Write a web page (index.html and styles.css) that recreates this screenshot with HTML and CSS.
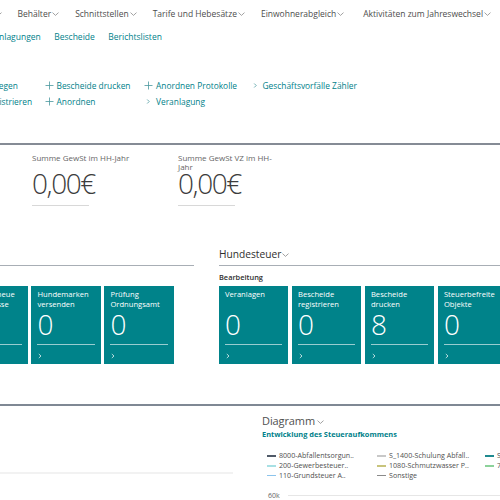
FILE: index.html
```html
<!DOCTYPE html>
<html lang="de">
<head>
<meta charset="utf-8">
<title>Rollencenter Steuern</title>
<link rel="stylesheet" href="styles.css">
</head>
<body>
<div class="page">
  <nav class="menu">
    <span class="menu-item lead"><svg class="chev" viewBox="0 0 7 4"><path d="M0.5 0.6L3.5 3.4L6.5 0.6"/></svg></span>
    <span class="menu-item">Behälter<svg class="chev" viewBox="0 0 7 4"><path d="M0.5 0.6L3.5 3.4L6.5 0.6"/></svg></span>
    <span class="menu-item">Schnittstellen<svg class="chev" viewBox="0 0 7 4"><path d="M0.5 0.6L3.5 3.4L6.5 0.6"/></svg></span>
    <span class="menu-item">Tarife und Hebesätze<svg class="chev" viewBox="0 0 7 4"><path d="M0.5 0.6L3.5 3.4L6.5 0.6"/></svg></span>
    <span class="menu-item">Einwohnerabgleich<svg class="chev" viewBox="0 0 7 4"><path d="M0.5 0.6L3.5 3.4L6.5 0.6"/></svg></span>
    <span class="menu-item wide">Aktivitäten zum Jahreswechsel<svg class="chev" viewBox="0 0 7 4"><path d="M0.5 0.6L3.5 3.4L6.5 0.6"/></svg></span>
  </nav>

  <nav class="links">
    <a class="link lead">Veranlagungen</a>
    <a class="link">Bescheide</a>
    <a class="link">Berichtslisten</a>
  </nav>

  <div class="actions">
    <div class="action-col col1">
      <a class="action"><svg class="ico" viewBox="0 0 9 9"><path d="M4.5 0.5V8.5M0.5 4.5H8.5"/></svg>Bescheide anlegen</a>
      <a class="action"><svg class="ico" viewBox="0 0 9 9"><path d="M4.5 0.5V8.5M0.5 4.5H8.5"/></svg>Bescheide registrieren</a>
    </div>
    <div class="action-col col2">
      <a class="action"><svg class="ico" viewBox="0 0 9 9"><path d="M4.5 0.5V8.5M0.5 4.5H8.5"/></svg>Bescheide drucken</a>
      <a class="action"><svg class="ico" viewBox="0 0 9 9"><path d="M4.5 0.5V8.5M0.5 4.5H8.5"/></svg>Anordnen</a>
    </div>
    <div class="action-col col3">
      <a class="action"><svg class="ico" viewBox="0 0 9 9"><path d="M4.5 0.5V8.5M0.5 4.5H8.5"/></svg>Anordnen Protokolle</a>
      <a class="action"><svg class="ico" viewBox="0 0 9 9"><path d="M3.2 2.5L5.2 4.5L3.2 6.5"/></svg>Veranlagung</a>
    </div>
    <div class="action-col col4">
      <a class="action"><svg class="ico" viewBox="0 0 9 9"><path d="M3.2 2.5L5.2 4.5L3.2 6.5"/></svg>Geschäftsvorfälle Zähler</a>
    </div>
  </div>

  <section class="kpis">
    <div class="kpi">
      <div class="kpi-label">Summe GewSt im HH-Jahr</div>
      <div class="kpi-value">0,00€</div>
      <div class="kpi-bar"></div>
    </div>
    <div class="kpi">
      <div class="kpi-label">Summe GewSt VZ im HH-Jahr</div>
      <div class="kpi-value">0,00€</div>
      <div class="kpi-bar"></div>
    </div>
  </section>

  <div class="groups">
    <section class="group group-left">
      <h2 class="group-title">Hundemarken<svg class="chev" viewBox="0 0 7 4"><path d="M0.5 0.6L3.5 3.4L6.5 0.6"/></svg></h2>
      <div class="group-sub">Bearbeitung</div>
      <div class="tiles">
        <a class="tile"><span class="tile-label">Anträge<br>prüfen</span><span class="tile-num">0</span><span class="tile-line"></span><svg class="tile-chev" viewBox="0 0 4 6"><path d="M0.8 1L3 3L0.8 5"/></svg></a>
        <a class="tile"><span class="tile-label">Zugänge neue<br>Hundepässe</span><span class="tile-num">0</span><span class="tile-line"></span><svg class="tile-chev" viewBox="0 0 4 6"><path d="M0.8 1L3 3L0.8 5"/></svg></a>
        <a class="tile"><span class="tile-label">Hundemarken<br>versenden</span><span class="tile-num">0</span><span class="tile-line"></span><svg class="tile-chev" viewBox="0 0 4 6"><path d="M0.8 1L3 3L0.8 5"/></svg></a>
        <a class="tile"><span class="tile-label">Prüfung<br>Ordnungsamt</span><span class="tile-num">0</span><span class="tile-line"></span><svg class="tile-chev" viewBox="0 0 4 6"><path d="M0.8 1L3 3L0.8 5"/></svg></a>
      </div>
    </section>
    <section class="group group-right">
      <h2 class="group-title">Hundesteuer<svg class="chev" viewBox="0 0 7 4"><path d="M0.5 0.6L3.5 3.4L6.5 0.6"/></svg></h2>
      <div class="group-sub">Bearbeitung</div>
      <div class="tiles">
        <a class="tile"><span class="tile-label">Veranlagen</span><span class="tile-num">0</span><span class="tile-line"></span><svg class="tile-chev" viewBox="0 0 4 6"><path d="M0.8 1L3 3L0.8 5"/></svg></a>
        <a class="tile"><span class="tile-label">Bescheide<br>registrieren</span><span class="tile-num">0</span><span class="tile-line"></span><svg class="tile-chev" viewBox="0 0 4 6"><path d="M0.8 1L3 3L0.8 5"/></svg></a>
        <a class="tile"><span class="tile-label">Bescheide<br>drucken</span><span class="tile-num">8</span><span class="tile-line"></span><svg class="tile-chev" viewBox="0 0 4 6"><path d="M0.8 1L3 3L0.8 5"/></svg></a>
        <a class="tile"><span class="tile-label">Steuerbefreite<br>Objekte</span><span class="tile-num">0</span><span class="tile-line"></span><svg class="tile-chev" viewBox="0 0 4 6"><path d="M0.8 1L3 3L0.8 5"/></svg></a>
      </div>
    </section>
  </div>

  <div class="bottom">
    <div class="list-panel"><div class="list-rule"></div></div>
    <div class="chart-panel">
      <h2 class="chart-title">Diagramm<svg class="chev" viewBox="0 0 7 4"><path d="M0.5 0.6L3.5 3.4L6.5 0.6"/></svg></h2>
      <div class="chart-sub">Entwicklung des Steueraufkommens</div>
      <div class="legend">
        <span class="leg"><i class="dash c-a"></i>8000-Abfallentsorgun..</span>
        <span class="leg"><i class="dash c-b"></i>200-Gewerbesteuer..</span>
        <span class="leg"><i class="dash c-c"></i>110-Grundsteuer A..</span>
        <span class="leg"><i class="dash c-d"></i>S_1400-Schulung Abfall..</span>
        <span class="leg"><i class="dash c-e"></i>1080-Schmutzwasser P..</span>
        <span class="leg"><i class="dash c-f"></i>Sonstige</span>
        <span class="leg"><i class="dash c-g"></i>S_1100-Straßenreinig..</span>
        <span class="leg"><i class="dash c-h"></i>7000-Wasserversorg..</span>
      </div>
      <div class="axis"><span class="axis-label">60k</span><span class="axis-line"></span></div>
    </div>
  </div>
</div>
</body>
</html>
```

FILE: styles.css
```css
html, body {
  margin: 0;
  padding: 0;
  background: #ffffff;
  overflow: hidden;
}

.page {
  width: 500px;
  height: 500px;
  overflow: hidden;
  font-family: "Open Sans", "Noto Sans", sans-serif;
  color: #4a4a4a;
}

a { text-decoration: none; color: inherit; }

.chev {
  width: 7px;
  height: 4px;
  fill: none;
  stroke: #8a8a8a;
  stroke-width: 0.8;
}

/* top menu */
.menu {
  height: 26px;
  display: flex;
  align-items: center;
  gap: 16px;
  font-size: 8.5px;
  color: #4d4d4d;
  white-space: nowrap;
}
.menu-item {
  display: flex;
  align-items: center;
  gap: 1px;
}
.menu-item .chev { margin-top: 2px; }
.menu-item.lead { margin-left: -5.5px; }
.menu-item.wide { margin-left: 3px; }

/* link row */
.links {
  height: 20px;
  display: flex;
  align-items: center;
  gap: 13.5px;
  font-size: 8.5px;
  color: #00818a;
  white-space: nowrap;
}
.link.lead { margin-left: -19px; }

/* actions */
.actions {
  margin-top: 31.5px;
  margin-left: -67.3px;
  display: flex;
  font-size: 8.4px;
  color: #00818a;
  white-space: nowrap;
}
.action-col { display: flex; flex-direction: column; }
.col1 { width: 111.8px; }
.col2 { width: 99.5px; }
.col3 { width: 106.5px; }
.action {
  height: 16px;
  display: flex;
  align-items: center;
  gap: 3px;
}
.ico {
  width: 9px;
  height: 9px;
  fill: none;
  stroke: #4a989e;
  stroke-width: 0.8;
}

/* KPIs */
.kpis {
  margin-top: 33.5px;
  border-top: 2px solid #858b95;
  padding: 7.75px 0 0 32px;
  display: flex;
  gap: 46px;
}
.kpi { width: 100px; }
.kpi-label {
  height: 19px;
  font-size: 8px;
  line-height: 9.5px;
  color: #666;
}
.kpi-value {
  font-size: 28px;
  font-weight: 300;
  line-height: 22px;
  letter-spacing: -1.4px;
  color: #3c3c3c;
}
.kpi-bar {
  margin-top: 11px;
  width: 57px;
  height: 1px;
  background: #d8d8d8;
}

/* tile groups */
.groups {
  margin-top: 40px;
  margin-left: -114.5px;
  display: flex;
  gap: 25px;
}
.group-left { width: 308.5px; flex: none; }
.group-right { width: 300px; flex: none; }
.group-title {
  margin: 0;
  padding-bottom: 3px;
  border-bottom: 1px solid #a8aeb5;
  font-size: 10.2px;
  line-height: 16px;
  font-weight: 400;
  color: #2e2e2e;
  display: flex;
  align-items: center;
  gap: 1px;
}
.group-title .chev { margin-top: 2px; }
.group-sub {
  padding-top: 4px;
  margin-bottom: 2.7px;
  font-size: 7.4px;
  line-height: 14px;
  font-weight: 600;
  color: #2e2e2e;
}
.tiles {
  display: flex;
  gap: 3.6px;
}
.tile {
  box-sizing: border-box;
  width: 69.4px;
  height: 77.5px;
  flex: none;
  padding: 4px 6px 0;
  background: #00838a;
  color: #ffffff;
  display: flex;
  flex-direction: column;
}
.tile-label {
  height: 19px;
  font-size: 7.6px;
  line-height: 9.3px;
  white-space: nowrap;
}
.tile-num {
  margin-top: 1.3px;
  font-size: 28px;
  font-weight: 300;
  line-height: 26px;
}
.tile-line {
  margin-top: 7px;
  height: 1px;
  background: rgba(255, 255, 255, 0.6);
}
.tile-chev {
  margin-top: 7.8px;
  margin-left: 1px;
  width: 4px;
  height: 6px;
  fill: none;
  stroke: rgba(255, 255, 255, 0.8);
  stroke-width: 0.9;
}

/* bottom */
.bottom {
  margin-top: 40px;
  border-top: 2px solid #7f8894;
  display: flex;
}
.list-panel {
  width: 233px;
  flex: none;
  padding-top: 66.4px;
}
.list-rule {
  height: 2px;
  background: #f2f2f2;
}
.chart-panel {
  margin-left: 29px;
  padding-top: 7.4px;
  flex: 1;
  min-width: 0;
}
.chart-title {
  margin: 0;
  font-size: 11px;
  line-height: 16px;
  font-weight: 400;
  letter-spacing: -0.1px;
  color: #505050;
  display: flex;
  align-items: center;
  gap: 2px;
}
.chart-title .chev { margin-top: 2px; }
.chart-sub {
  font-size: 7.4px;
  line-height: 10px;
  font-weight: 700;
  color: #00818a;
  white-space: nowrap;
}
.legend {
  margin: 12px 0 0 5px;
  display: grid;
  grid-auto-flow: column;
  grid-template-rows: repeat(3, 9.7px);
  grid-template-columns: 110px 108px 100px;
  font-size: 7.1px;
  line-height: 9.7px;
  color: #505050;
  white-space: nowrap;
}
.leg {
  display: flex;
  align-items: center;
  gap: 3px;
}
.dash {
  width: 9px;
  height: 1.5px;
  flex: none;
}
.c-a { background: #505a68; }
.c-b { background: #a8e0e4; }
.c-c { background: #8cc4ec; }
.c-d { background: #c8c8c8; }
.c-e { background: #c8c47c; }
.c-f { background: #8a8a8a; }
.c-g { background: #1f8a8f; }
.c-h { background: #8cd29a; }

.axis {
  margin: 10px 0 0 6px;
  height: 10px;
  display: flex;
  align-items: center;
  gap: 8px;
}
.axis-label {
  font-size: 7px;
  color: #666;
}
.axis-line {
  flex: 1;
  height: 1px;
  background: #e6e6e6;
}
```
